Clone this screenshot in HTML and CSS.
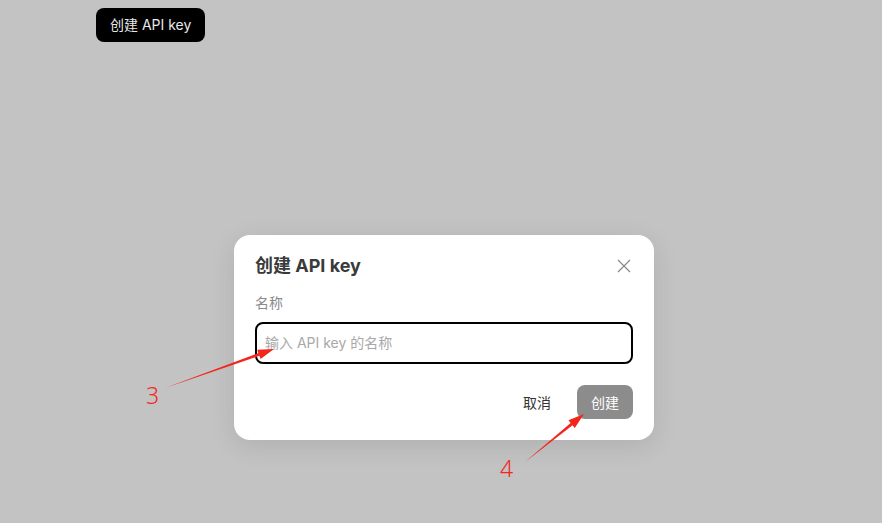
FILE: index.html
```html
<!DOCTYPE html>
<html lang="zh">
<head>
<meta charset="utf-8">
<title>创建 API key</title>
<link rel="stylesheet" href="styles.css">
</head>
<body>
<header class="topbar">
  <button class="btn-dark">创建 API key</button>
</header>

<div class="modal">
  <div class="modal-head">
    <h2 class="modal-title">创建 API key</h2>
    <button class="close" aria-label="关闭">
      <svg viewBox="0 0 14 14" width="14" height="14"><path d="M1 1 L13 13 M13 1 L1 13" stroke="#888" stroke-width="1.2" fill="none"/></svg>
    </button>
  </div>
  <label class="field-label">名称</label>
  <div class="input">输入 API key 的名称</div>
  <div class="modal-foot">
    <button class="btn-ghost">取消</button>
    <button class="btn-gray">创建</button>
  </div>
</div>

<svg class="annot" width="882" height="523" viewBox="0 0 882 523">
  <polygon fill="#f3261c" points="165,388 259.4,355.8 260.6,359.1 274,349 257.2,349.7 258.4,353.0"/>
  <polygon fill="#f3261c" points="525,462 572.55,425.26 574.76,427.98 584,414 568.44,420.22 570.65,422.94"/>
</svg>
<span class="num num3">3</span>
<span class="num num4">4</span>
</body>
</html>
```

FILE: styles.css
```css
* { box-sizing: border-box; }
html, body { margin: 0; height: 100%; }
body {
  background: #c3c3c3;
  font-family: Inter, "Noto Sans CJK SC", "Noto Sans", sans-serif;
  width: 882px;
  height: 523px;
  overflow: hidden;
  position: relative;
}
button { font-family: inherit; border: none; cursor: pointer; }

.topbar { padding: 8px 0 0 96px; }
.btn-dark {
  background: #000;
  color: #e8e8e8;
  font-size: 14px;
  height: 34px;
  padding: 0 14px;
  border-radius: 8px;
  line-height: 34px;
}

.modal {
  position: absolute;
  left: 234px;
  top: 235px;
  width: 420px;
  height: 205px;
  background: #fff;
  border-radius: 16px;
  box-shadow: 0 6px 26px rgba(0,0,0,0.10);
  padding: 18px 21px 21px;
  display: flex;
  flex-direction: column;
}
.modal-head {
  display: flex;
  align-items: center;
  justify-content: space-between;
  height: 26px;
}
.modal-title {
  margin: 0;
  font-size: 18px;
  font-weight: 700;
  color: #3a3a3a;
  line-height: 26px;
}
.close {
  background: none;
  padding: 0;
  width: 14px;
  height: 14px;
  margin-right: 2px;
  display: flex;
}
.field-label {
  margin-top: 14px;
  font-size: 14px;
  color: #8a8a8a;
  line-height: 20px;
}
.input {
  margin-top: 9px;
  height: 42px;
  border: 2px solid #000;
  border-radius: 8px;
  padding: 0 8px;
  font-size: 14px;
  color: #a8a8a8;
  line-height: 38px;
}
.modal-foot {
  margin-top: 21px;
  display: flex;
  justify-content: flex-end;
  gap: 12px;
}
.btn-ghost {
  background: none;
  height: 34px;
  padding: 0 14px;
  font-size: 14px;
  color: #333;
}
.btn-gray {
  background: #8c8c8c;
  color: #fff;
  height: 34px;
  padding: 0 14px;
  font-size: 14px;
  border-radius: 8px;
}

.annot { position: absolute; left: 0; top: 0; pointer-events: none; }
.num {
  position: absolute;
  font-family: "Noto Sans", "DejaVu Sans", sans-serif;
  font-size: 23px;
  font-weight: 300;
  color: #f3261c;
  line-height: 1;
}
.num3 { left: 146px; top: 384px; }
.num4 { left: 500px; top: 457px; }
```
